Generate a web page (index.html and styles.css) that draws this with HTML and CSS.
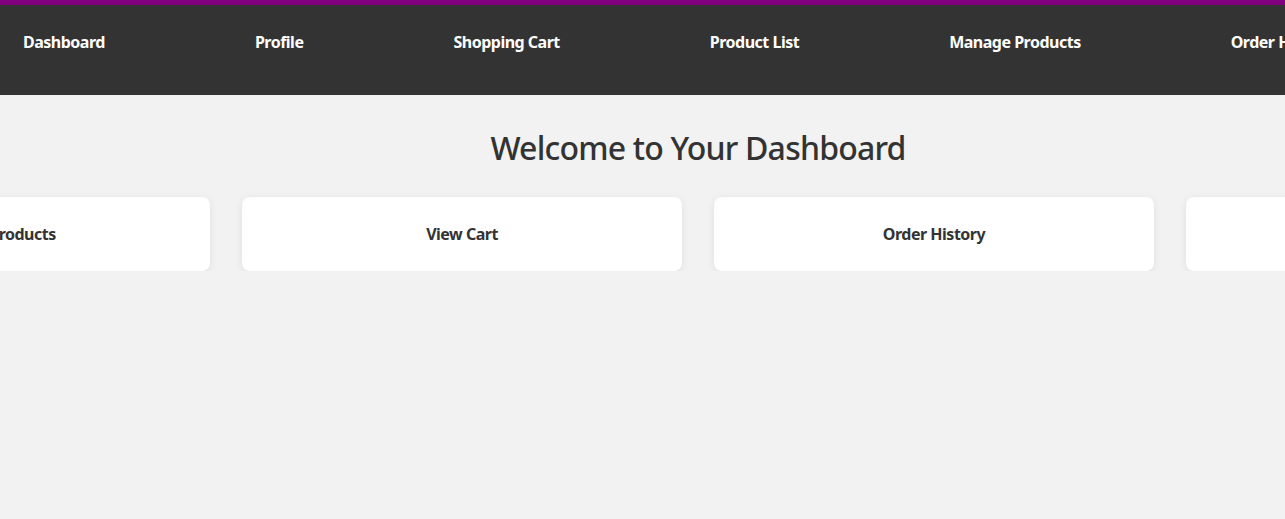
FILE: index.html
```html
<!DOCTYPE html>
<html>
<head>
<meta charset="utf-8">
<link rel="stylesheet" href="styles.css">
</head>
<body>
<nav class="topnav">
  <a class="nav-link" href="#">Dashboard</a>
  <a class="nav-link" href="#">Profile</a>
  <a class="nav-link" href="#">Shopping Cart</a>
  <a class="nav-link" href="#">Product List</a>
  <a class="nav-link" href="#">Manage Products</a>
  <a class="nav-link" href="#">Order History</a>
</nav>
<main class="content">
  <h1 class="title">Welcome to Your Dashboard</h1>
  <div class="cards">
    <div class="card">Manage Products</div>
    <div class="card">View Cart</div>
    <div class="card">Order History</div>
    <div class="card">Edit Profile</div>
  </div>
</main>
</body>
</html>
```
FILE: styles.css
```css
html, body {
  margin: 0;
  padding: 0;
  background: #f2f2f2;
  overflow: hidden;
  font-family: "Noto Sans", "Open Sans", sans-serif;
  color: #333;
}
.topnav {
  display: flex;
  align-items: flex-start;
  gap: 150px;
  height: 64px;
  padding: 26px 0 0 23px;
  background: #333;
  border-top: 5px solid #800080;
  white-space: nowrap;
  overflow: hidden;
}
.nav-link {
  color: #fff;
  text-decoration: none;
  font-weight: 700;
  font-size: 16px;
  line-height: 22px;
  letter-spacing: -0.5px;
  flex-shrink: 0;
}
.content {
  width: 1396px;
  overflow: visible;
}
.title {
  margin: 33px 0 0;
  text-align: center;
  font-size: 32px;
  font-weight: 500;
  line-height: 40px;
  letter-spacing: -0.8px;
  color: #333;
}
.cards {
  display: flex;
  justify-content: center;
  gap: 32px;
  margin-top: 29px;
}
.card {
  flex: 0 0 440px;
  height: 74px;
  display: flex;
  align-items: center;
  justify-content: center;
  background: #fff;
  border-radius: 8px;
  box-shadow: 0 2px 8px rgba(0,0,0,0.08);
  font-weight: 700;
  font-size: 16px;
  letter-spacing: -0.5px;
  color: #333;
}
```
